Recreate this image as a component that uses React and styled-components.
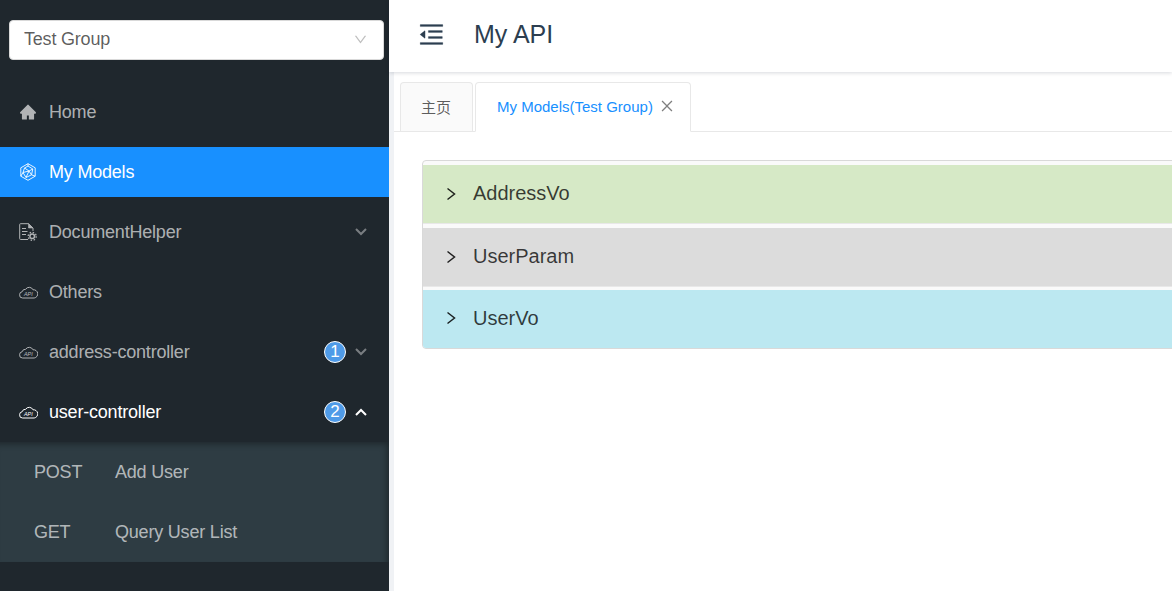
import React from 'react'
import styled, { createGlobalStyle } from 'styled-components'
import {
  AiFillHome,
  AiOutlineClose,
  AiOutlineDown,
  AiOutlineMenuFold,
} from 'react-icons/ai'

const GlobalStyle = createGlobalStyle`
  html, body {
    margin: 0;
    height: 100%;
    overflow: hidden;
    font-family: "Liberation Sans", Arial, "Noto Sans CJK SC", sans-serif;
  }
`

const Layout = styled.div`
  display: flex;
  height: 591px;
  width: 1172px;
  overflow: hidden;
  background: #f0f2f5;
`
const Sidebar = styled.aside`
  flex: 0 0 389px;
  background: #1f272d;
  padding-top: 20px;
  box-sizing: border-box;
  letter-spacing: -0.2px;
`
const GroupSelect = styled.div`
  display: flex;
  align-items: center;
  justify-content: space-between;
  box-sizing: border-box;
  height: 40px;
  margin: 0 5px 0 9px;
  padding: 0 15px 2px 14px;
  background: #fff;
  border: 1px solid #d9d9d9;
  border-radius: 4px;
  font-size: 18px;
  color: rgba(0, 0, 0, 0.65);
  svg {
    color: #bfbfbf;
    font-size: 15px;
  }
`
const Menu = styled.nav`
  margin-top: 27px;
`
const MenuItem = styled.div`
  display: flex;
  align-items: center;
  height: 50px;
  margin-bottom: 10px;
  padding: 0 22px 0 19px;
  font-size: 18px;
  color: ${(p) => (p.$active || p.$open ? '#fff' : 'rgba(255, 255, 255, 0.65)')};
  background: ${(p) => (p.$active ? '#1890ff' : 'transparent')};
`
const IconSlot = styled.span`
  display: flex;
  align-items: center;
  justify-content: center;
  width: 18px;
  min-width: 0;
  margin-right: 12px;
  opacity: ${(p) => (p.$active || p.$open ? 1 : 0.65)};
  color: #fff;
`
const Label = styled.span`
  flex: 1;
`
const Badge = styled.span`
  display: flex;
  align-items: center;
  justify-content: center;
  box-sizing: border-box;
  width: 22px;
  height: 22px;
  margin-right: 9px;
  border: 1px solid #fff;
  border-radius: 50%;
  background: #4f9be8;
  color: #fff;
  font-size: 17px;
`
const Caret = styled.svg`
  width: 12px;
  height: 8px;
  fill: none;
  stroke: #fff;
  stroke-width: 2;
  opacity: ${(p) => (p.$open ? 1 : 0.4)};
`
const SubMenu = styled.div`
  margin-top: -5px;
  background: #2e3c43;
  box-shadow: inset -4px 4px 6px -2px rgba(0, 0, 0, 0.35);
`
const SubItem = styled.div`
  display: flex;
  align-items: center;
  height: 60px;
  padding-left: 34px;
  font-size: 18px;
  color: rgba(255, 255, 255, 0.65);
`
const Method = styled.span`
  flex: 0 0 81px;
`
const Main = styled.main`
  flex: 1;
  min-width: 0;
  display: flex;
  flex-direction: column;
`
const Header = styled.header`
  display: flex;
  align-items: center;
  box-sizing: border-box;
  flex: 0 0 72px;
  padding: 0 0 3px 28px;
  background: #fff;
  box-shadow: 0 1px 4px rgba(0, 21, 41, 0.16);
  position: relative;
  svg {
    font-size: 29px;
    color: #2c3e50;
    stroke: currentColor;
    stroke-width: 8;
  }
`
const Title = styled.h1`
  margin: 0 0 0 28px;
  font-size: 25px;
  font-weight: 400;
  color: #2c3e50;
`
const Content = styled.section`
  flex: 1;
  margin-left: 5px;
  padding-top: 10px;
  background: #fff;
`
const TabBar = styled.div`
  display: flex;
  gap: 2px;
  height: 49px;
  padding-left: 6px;
  border-bottom: 1px solid #e8e8e8;
`
const Tab = styled.div`
  display: flex;
  align-items: center;
  box-sizing: border-box;
  height: ${(p) => (p.$active ? '50px' : '49px')};
  margin-bottom: ${(p) => (p.$active ? '-1px' : '0')};
  padding: 0 ${(p) => (p.$active ? '15px' : '21px')} 2px ${(p) => (p.$active ? '21px' : '20px')};
  border: 1px solid #e8e8e8;
  border-bottom: ${(p) => (p.$active ? '1px solid #fff' : '0')};
  border-radius: 4px 4px 0 0;
  background: ${(p) => (p.$active ? '#fff' : '#fafafa')};
  color: ${(p) => (p.$active ? '#1890ff' : 'rgba(0, 0, 0, 0.65)')};
  font-size: 15px;
  svg {
    margin-left: 6px;
    font-size: 16px;
    color: rgba(0, 0, 0, 0.5);
  }
`
const Collapse = styled.div`
  width: 800px;
  margin: 28px 0 0 28px;
  background: #fafafa;
  border: 1px solid #d9d9d9;
  border-radius: 4px;
  overflow: hidden;
`
const Panel = styled.div`
  display: flex;
  align-items: center;
  box-sizing: border-box;
  height: ${(p) => (p.$last ? '58px' : '59px')};
  margin-top: ${(p) => p.$gap}px;
  padding: 0 0 ${(p) => (p.$last ? '2px' : '1px')} 23px;
  background: ${(p) => p.$color};
  border-bottom: ${(p) => (p.$last ? '0' : '1px solid #e8e8e8')};
  font-size: 20px;
  color: rgba(0, 0, 0, 0.75);
`
const PanelArrow = styled.svg`
  width: 10px;
  height: 14px;
  margin-right: 17px;
  fill: none;
  stroke: rgba(0, 0, 0, 0.85);
  stroke-width: 1.5;
`

const CloudIcon = () => (
  <svg width="19" height="14" viewBox="0 0 19 14" fill="none" style={{ flexShrink: 0 }}>
    <path
      d="M5 13H3.6A3 3 0 0 1 .6 9.7a3 3 0 0 1 2.6-3A3.2 3.2 0 0 1 6.6 4.3 4.2 4.2 0 0 1 14 4.8a4 4 0 0 1 1.2 8.2H5Z"
      stroke="currentColor"
      strokeWidth="1"
    />
    <text x="5" y="10.8" fontSize="5.4" fontStyle="italic" letterSpacing="0" fill="currentColor">API</text>
  </svg>
)

const CubeIcon = () => (
  <svg width="16" height="18" viewBox="0 0 16 18" fill="none" stroke="currentColor" strokeWidth="0.9">
    <path d="M8 .7 15.2 4.8V13.2L8 17.3.8 13.2V4.8Z" />
    <path d="M8 3 12.8 6 11.5 11.8 6 14.5 3 9.5 4.5 5Z" />
    <path d="M4.5 5 9 8 6 14.5M9 8 12.8 6M9 8 11.5 11.8M3 9.5 9 8M8 .7V3M15.2 13.2 11.5 11.8M.8 13.2 3 9.5" />
  </svg>
)

const DocGearIcon = () => (
  <svg width="18" height="18" viewBox="0 0 18 18" fill="none" stroke="currentColor">
    <path d="M9 16.5H1.5a.8.8 0 0 1-.8-.8V1.5a.8.8 0 0 1 .8-.8h8L14 5v3" strokeWidth="1" />
    <path d="M9.5.7 14 5H9.5Z" fill="currentColor" strokeWidth="0.6" />
    <path d="M3 5.5h4M3 8.5h5.5M3 11.5h4" strokeWidth="1" />
    <circle cx="13.2" cy="13.3" r="2.3" strokeWidth="1.5" />
    <circle cx="13.2" cy="13.3" r="4" strokeWidth="1.3" strokeDasharray="1.5 1.64" />
  </svg>
)

const CaretIcon = ({ open }) => (
  <Caret $open={open} viewBox="0 0 12 8">
    <polyline points={open ? '1,7 6,2 11,7' : '1,1 6,6 11,1'} />
  </Caret>
)

const menus = [
  { label: 'Home', icon: <AiFillHome size={18} /> },
  { label: 'My Models', icon: <CubeIcon />, active: true },
  { label: 'DocumentHelper', icon: <DocGearIcon />, caret: true },
  { label: 'Others', icon: <CloudIcon /> },
  { label: 'address-controller', icon: <CloudIcon />, badge: 1, caret: true },
  { label: 'user-controller', icon: <CloudIcon />, badge: 2, caret: true, open: true },
]

const subItems = [
  { method: 'POST', label: 'Add User' },
  { method: 'GET', label: 'Query User List' },
]

const panels = [
  { label: 'AddressVo', color: '#d6e9c6', gap: 4 },
  { label: 'UserParam', color: '#dcdcdc', gap: 4 },
  { label: 'UserVo', color: '#bce8f1', gap: 3, last: true },
]

const App = () => (
  <Layout>
    <GlobalStyle />
    <Sidebar>
      <GroupSelect>
        Test Group
        <AiOutlineDown />
      </GroupSelect>
      <Menu>
        {menus.map((item) => (
          <MenuItem key={item.label} $active={item.active} $open={item.open}>
            <IconSlot $active={item.active} $open={item.open}>{item.icon}</IconSlot>
            <Label>{item.label}</Label>
            {item.badge && <Badge>{item.badge}</Badge>}
            {item.caret && <CaretIcon open={item.open} />}
          </MenuItem>
        ))}
        <SubMenu>
          {subItems.map((item) => (
            <SubItem key={item.label}>
              <Method>{item.method}</Method>
              {item.label}
            </SubItem>
          ))}
        </SubMenu>
      </Menu>
    </Sidebar>
    <Main>
      <Header>
        <AiOutlineMenuFold />
        <Title>My API</Title>
      </Header>
      <Content>
        <TabBar>
          <Tab>主页</Tab>
          <Tab $active>
            My Models(Test Group)
            <AiOutlineClose />
          </Tab>
        </TabBar>
        <Collapse>
          {panels.map((panel) => (
            <Panel key={panel.label} $color={panel.color} $gap={panel.gap} $last={panel.last}>
              <PanelArrow viewBox="0 0 10 14">
                <polyline points="1.5,1.5 8.5,7 1.5,12.5" />
              </PanelArrow>
              {panel.label}
            </Panel>
          ))}
        </Collapse>
      </Content>
    </Main>
  </Layout>
)

export default App
